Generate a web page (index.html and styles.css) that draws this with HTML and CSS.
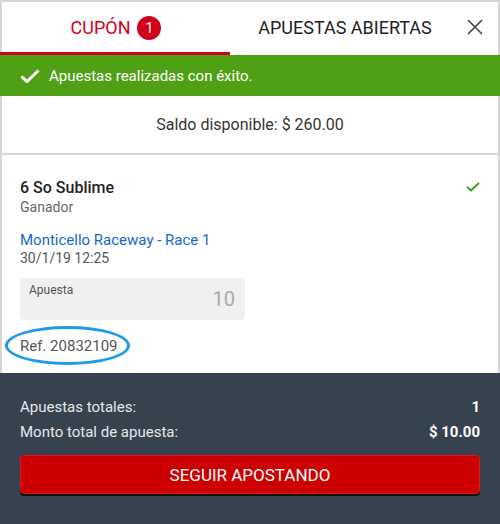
FILE: index.html
```html
<!DOCTYPE html>
<html>
	<head>
		<meta charset="UTF-8">
		<title>Cupón</title>
		<link rel="stylesheet" href="styles.css">
	</head>
	<body>
		<div id="slip">
			<div class="slip_tabs">
				<div class="tab selected">CUPÓN <span class="badge">1</span></div>
				<div class="tab">APUESTAS ABIERTAS</div>
				<div class="close">
					<svg width="16" height="16" viewBox="0 0 16 16"><path d="M1 1L15 15M15 1L1 15" stroke="#444" stroke-width="1.6" fill="none"/></svg>
				</div>
			</div>

			<div class="slip_ok">
				<svg width="20" height="14" viewBox="0 0 20 14"><path d="M1.5 7.5L7 12.5L18.5 1.5" stroke="#fff" stroke-width="3" fill="none"/></svg>
				<span>Apuestas realizadas con éxito.</span>
			</div>

			<div class="slip_saldo">Saldo disponible: $ 260.00</div>

			<div class="slip_bet">
				<div class="bet_head">
					<div class="bet_name">6 So Sublime</div>
					<svg class="bet_tick" width="14" height="10" viewBox="0 0 14 10"><path d="M1 5L5 8.5L13 1" stroke="#3f9c1a" stroke-width="2" fill="none"/></svg>
				</div>
				<div class="bet_type">Ganador</div>
				<div class="bet_event">Monticello Raceway - Race 1</div>
				<div class="bet_date">30/1/19 12:25</div>
				<div class="bet_stake">
					<span class="stake_label">Apuesta</span>
					<span class="stake_value">10</span>
				</div>
				<div class="bet_ref">Ref. 20832109</div>
			</div>

			<div class="slip_foot">
				<div class="foot_row"><span>Apuestas totales:</span><b>1</b></div>
				<div class="foot_row"><span>Monto total de apuesta:</span><b>$ 10.00</b></div>
				<div class="foot_btn">SEGUIR APOSTANDO</div>
			</div>
		</div>
	</body>
</html>
```

FILE: styles.css
```css
*{padding: 0;margin: 0;box-sizing: border-box;}

body{font-family: Roboto, "Liberation Sans", sans-serif;background: #fff;}

#slip{width: 500px;height: 524px;border: 2px solid #d6d6d6;border-bottom: none;display: flex;flex-direction: column;background: #fff;}

.slip_tabs{display: flex;height: 53px;margin: 0 -2px;}
.slip_tabs>.tab{display: flex;align-items: center;justify-content: center;font-size: 18px;color: #222;border-bottom: 3px solid transparent;padding-top: 1px;}
.slip_tabs>.tab:first-child{width: 230px;padding-left: 2px;}
.slip_tabs>.tab:nth-child(2){width: 230px;}
.slip_tabs>.selected{color: #d0021b;border-bottom-color: #d0021b;}
.badge{width: 24px;height: 24px;border-radius: 12px;background: #d0021b;color: #fff;font-size: 14px;display: flex;align-items: center;justify-content: center;margin-left: 7px;}
.close{flex: 1;display: flex;align-items: center;justify-content: center;padding: 0 10px 4px 0;}

.slip_ok{height: 41px;margin: 0 -2px;background: #50a016;color: #fff;font-size: 15px;display: flex;align-items: center;padding-left: 20px;gap: 9px;}

.slip_saldo{height: 59px;display: flex;align-items: center;justify-content: center;font-size: 16px;color: #333;border-bottom: 2px solid #d6d6d6;}

.slip_bet{flex: 1;padding: 23px 18px 0 18px;}
.bet_head{display: flex;justify-content: space-between;align-items: flex-start;}
.bet_name{font-size: 16px;font-weight: 500;color: #222;line-height: 19px;}
.bet_tick{margin-top: 4px;}
.bet_type{font-size: 14px;color: #666;line-height: 20px;}
.bet_event{font-size: 15px;color: #1769c8;line-height: 20px;margin-top: 13px;}
.bet_date{font-size: 14px;color: #555;line-height: 16px;}
.bet_stake{width: 225px;height: 42px;margin-top: 12px;background: #f0f0f0;border-radius: 4px;position: relative;}
.stake_label{position: absolute;left: 9px;top: 5px;font-size: 12px;color: #555;}
.stake_value{position: absolute;right: 10px;top: 9px;font-size: 20px;color: #aaa;}
.bet_ref{display: inline-block;margin: 6px 0 0 -15px;padding: 9px 9px 8px 12px;font-size: 15px;color: #555;border: 3px solid #1e9be8;border-radius: 50%;line-height: 16px;}

.slip_foot{height: 151px;margin: 0 -2px;background: #37424f;padding: 22px 20px 0 20px;}
.foot_row{display: flex;justify-content: space-between;font-size: 15px;color: #e6e8ea;line-height: 25px;}
.foot_row>b{color: #fff;font-weight: 700;}
.foot_btn{height: 39px;margin-top: 10px;background: #cc0000;border: 1px solid #ee1111;border-radius: 4px;box-shadow: 0 2px 0 #111;color: #fff;font-size: 17px;display: flex;align-items: center;justify-content: center;}
```
